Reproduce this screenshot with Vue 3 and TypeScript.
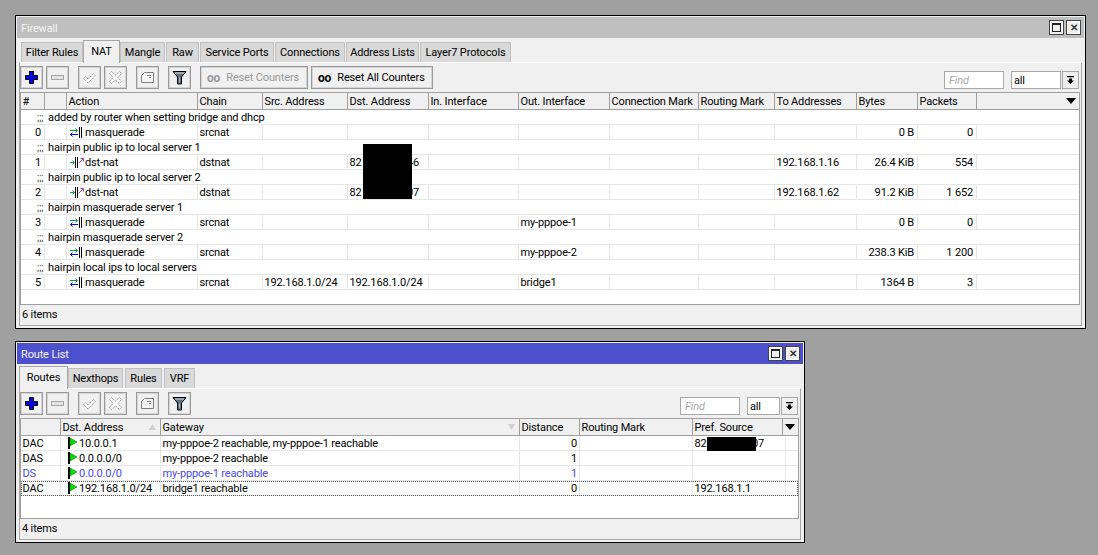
<script setup lang="ts">
interface NatRule {
  id: number
  comment: string
  action: 'masquerade' | 'dst-nat'
  chain: string
  src?: string
  dst?: [string, string] | string
  out?: string
  to?: string
  bytes: string
  packets: string
}

interface Route {
  flags: string
  dst: string
  gateway: string
  distance: string
  pref?: [string, string] | string
  muted?: boolean
  focused?: boolean
}

const natTabs = ['Filter Rules', 'NAT', 'Mangle', 'Raw', 'Service Ports', 'Connections', 'Address Lists', 'Layer7 Protocols']
const routeTabs = ['Routes', 'Nexthops', 'Rules', 'VRF']

const natColumns = [
  '#', '', 'Action', 'Chain', 'Src. Address', 'Dst. Address', 'In. Interface', 'Out. Interface',
  'Connection Mark', 'Routing Mark', 'To Addresses', 'Bytes', 'Packets',
]

const natRules: NatRule[] = [
  { id: 0, comment: 'added by router when setting bridge and dhcp', action: 'masquerade', chain: 'srcnat', bytes: '0 B', packets: '0' },
  { id: 1, comment: 'hairpin public ip to local server 1', action: 'dst-nat', chain: 'dstnat', dst: ['82', '46'], to: '192.168.1.16', bytes: '26.4 KiB', packets: '554' },
  { id: 2, comment: 'hairpin public ip to local server 2', action: 'dst-nat', chain: 'dstnat', dst: ['82', '07'], to: '192.168.1.62', bytes: '91.2 KiB', packets: '1 652' },
  { id: 3, comment: 'hairpin masquerade server 1', action: 'masquerade', chain: 'srcnat', out: 'my-pppoe-1', bytes: '0 B', packets: '0' },
  { id: 4, comment: 'hairpin masquerade server 2', action: 'masquerade', chain: 'srcnat', out: 'my-pppoe-2', bytes: '238.3 KiB', packets: '1 200' },
  { id: 5, comment: 'hairpin local ips to local servers', action: 'masquerade', chain: 'srcnat', src: '192.168.1.0/24', dst: '192.168.1.0/24', out: 'bridge1', bytes: '1364 B', packets: '3' },
]

const routes: Route[] = [
  { flags: 'DAC', dst: '10.0.0.1', gateway: 'my-pppoe-2 reachable, my-pppoe-1 reachable', distance: '0', pref: ['82', '07'] },
  { flags: 'DAS', dst: '0.0.0.0/0', gateway: 'my-pppoe-2 reachable', distance: '1' },
  { flags: 'DS', dst: '0.0.0.0/0', gateway: 'my-pppoe-1 reachable', distance: '1', muted: true },
  { flags: 'DAC', dst: '192.168.1.0/24', gateway: 'bridge1 reachable', distance: '0', pref: '192.168.1.1', focused: true },
]

const tools = [
  { icon: 'i-plus', off: false, gap: false },
  { icon: 'i-minus', off: true, gap: false },
  { icon: 'i-check', off: true, gap: true },
  { icon: 'i-cross', off: true, gap: false },
  { icon: 'i-note', off: true, gap: true },
  { icon: 'i-filter', off: false, gap: true },
]
</script>

<template>
  <div class="desktop">
    <svg class="defs" aria-hidden="true">
      <symbol id="i-plus" viewBox="0 0 15 15">
        <path d="M5.5 1.5h4v4h4v4h-4v4h-4v-4h-4v-4h4z" fill="#0000e6" stroke="#000" />
      </symbol>
      <symbol id="i-minus" viewBox="0 0 15 15">
        <rect x="1.5" y="5.5" width="12" height="4" fill="#e4e4e4" stroke="#a6a6a6" />
      </symbol>
      <symbol id="i-check" viewBox="0 0 15 15">
        <path d="M1.5 8.5l2-2 2.5 2.5 5.5-5.5 2 2-7.5 7.5z" fill="#f8f8f8" stroke="#9a9a9a" stroke-dasharray="1.5 .8" />
      </symbol>
      <symbol id="i-cross" viewBox="0 0 15 15">
        <path d="M3.5 1.5l4 3.5 4-3.5 2 2-3.5 4 3.5 4-2 2-4-3.5-4 3.5-2-2 3.5-4-3.5-4z" fill="#f8f8f8" stroke="#9a9a9a" stroke-dasharray="1.5 .8" />
      </symbol>
      <symbol id="i-note" viewBox="0 0 15 15">
        <path d="M4.5 2.5h9v10h-12v-7z" fill="#f4f4f4" stroke="#808080" />
        <path d="M7 5.5h4M9 7.5h2" stroke="#808080" />
      </symbol>
      <symbol id="i-filter" viewBox="0 0 15 15">
        <path d="M1 1.5h13l-4.5 5.5v7h-4v-7z" fill="#5f7080" stroke="#000" />
        <path d="M3 3h9" stroke="#d8dde2" />
        <path d="M7.5 7.5v5" stroke="#a8b4be" />
      </symbol>
      <symbol id="i-masq" viewBox="0 0 12 11">
        <path d="M0 3.5h7M5.5 1.5l2 2-2 2" fill="none" stroke="#00a040" />
        <path d="M8 7.5h-7M2.5 5.5l-2 2 2 2" fill="none" stroke="#0000e0" />
        <path d="M9.5 0v11M11.5 0v11" stroke="#000" fill="none" />
      </symbol>
      <symbol id="i-dnat" viewBox="0 0 14 11">
        <path d="M0 5.5h4M2.5 3.5l2 2-2 2" fill="none" stroke="#10a050" />
        <path d="M5.5 0v11M7.5 0v11" stroke="#000" fill="none" />
        <path d="M9 6l4-4M10.5 1.5h3v3" fill="none" stroke="#a040c0" />
      </symbol>
      <symbol id="i-flag" viewBox="0 0 10 12">
        <rect x="0" y="0" width="2" height="12" fill="#000" />
        <path d="M2 1l7 4-7 4z" fill="#00e000" stroke="#006000" stroke-width=".5" />
      </symbol>
    </svg>

    <!-- Firewall -->
    <section class="win win-nat">
      <header class="title inactive">
        <span class="title-text">Firewall</span>
        <span class="title-btns">
          <i class="tbtn"><b class="max"></b></i>
          <i class="tbtn close">✕</i>
        </span>
      </header>
      <nav class="tabs">
        <span
          v-for="(t, i) in natTabs"
          :key="t"
          class="tab"
          :class="[{ on: t === 'NAT' }, `nat-tab-${i}`]"
        >{{ t }}</span>
      </nav>
      <div class="pane">
        <div class="toolbar">
          <button
            v-for="tool in tools"
            :key="tool.icon"
            class="tool"
            :class="{ gap: tool.gap, off: tool.off }"
          >
            <svg width="15" height="15"><use :href="`#${tool.icon}`" /></svg>
          </button>
          <button class="tool wide off gap reset-one"><b>oo</b>Reset Counters</button>
          <button class="tool wide reset-all"><b>oo</b>Reset All Counters</button>
          <span class="search">Find</span>
          <span class="combo">all</span>
          <button class="pick"><span class="pick-arrow"></span></button>
        </div>
        <div class="table">
          <div class="row head">
            <span v-for="c in natColumns" :key="c" class="cell">{{ c }}</span>
            <span class="cell menu"><span class="tri"></span></span>
          </div>
          <template v-for="r in natRules" :key="r.id">
            <div class="row note"><span class="semi">;;;</span> {{ r.comment }}</div>
            <div class="row">
              <span class="cell num">{{ r.id }}</span>
              <span class="cell"></span>
              <span class="cell action">
                <svg v-if="r.action === 'masquerade'" class="ico masq" width="12" height="11"><use href="#i-masq" /></svg>
                <svg v-else class="ico dnat" width="14" height="11"><use href="#i-dnat" /></svg>
                <span>{{ r.action }}</span>
              </span>
              <span class="cell">{{ r.chain }}</span>
              <span class="cell">{{ r.src }}</span>
              <span v-if="Array.isArray(r.dst)" class="cell masked">
                <span>{{ r.dst[0] }}</span><span>{{ r.dst[1] }}</span>
              </span>
              <span v-else class="cell">{{ r.dst }}</span>
              <span class="cell"></span>
              <span class="cell">{{ r.out }}</span>
              <span class="cell"></span>
              <span class="cell"></span>
              <span class="cell">{{ r.to }}</span>
              <span class="cell num">{{ r.bytes }}</span>
              <span class="cell num">{{ r.packets }}</span>
              <span class="cell last"></span>
            </div>
          </template>
        </div>
        <div class="status">6 items</div>
      </div>
      <div class="redact redact-nat"></div>
    </section>

    <!-- Route List -->
    <section class="win win-route">
      <header class="title">
        <span class="title-text">Route List</span>
        <span class="title-btns">
          <i class="tbtn"><b class="max"></b></i>
          <i class="tbtn close">✕</i>
        </span>
      </header>
      <nav class="tabs">
        <span
          v-for="(t, i) in routeTabs"
          :key="t"
          class="tab"
          :class="[{ on: i === 0 }, `route-tab-${i}`]"
        >{{ t }}</span>
      </nav>
      <div class="pane">
        <div class="toolbar">
          <button
            v-for="tool in tools"
            :key="tool.icon"
            class="tool"
            :class="{ gap: tool.gap, off: tool.off }"
          >
            <svg width="15" height="15"><use :href="`#${tool.icon}`" /></svg>
          </button>
          <span class="search">Find</span>
          <span class="combo short">all</span>
          <button class="pick"><span class="pick-arrow"></span></button>
        </div>
        <div class="table">
          <div class="row head">
            <span class="cell"></span>
            <span class="cell sorted">Dst. Address<span class="sort up"></span></span>
            <span class="cell sorted">Gateway<span class="sort down"></span></span>
            <span class="cell">Distance</span>
            <span class="cell">Routing Mark</span>
            <span class="cell">Pref. Source</span>
            <span class="cell menu"><span class="tri"></span></span>
          </div>
          <div
            v-for="(r, i) in routes"
            :key="i"
            class="row"
            :class="{ muted: r.muted, focused: r.focused }"
          >
            <span class="cell">{{ r.flags }}</span>
            <span class="cell action">
              <svg class="flag" width="10" height="12"><use href="#i-flag" /></svg>
              <span>{{ r.dst }}</span>
            </span>
            <span class="cell">{{ r.gateway }}</span>
            <span class="cell num">{{ r.distance }}</span>
            <span class="cell"></span>
            <span v-if="Array.isArray(r.pref)" class="cell masked">
              <span>{{ r.pref[0] }}</span><span>{{ r.pref[1] }}</span>
            </span>
            <span v-else class="cell">{{ r.pref }}</span>
            <span class="cell last"></span>
          </div>
        </div>
        <div class="status">4 items</div>
      </div>
      <div class="redact redact-route"></div>
    </section>
  </div>
</template>

<style>
body {
  background: #a0a0a0;
}
</style>

<style scoped>
.desktop {
  position: relative;
  width: 1098px;
  height: 555px;
  overflow: hidden;
  background: #a0a0a0;
  font-family: Roboto, "Liberation Sans", Arial, sans-serif;
  font-size: 11px;
  letter-spacing: -.15px;
  color: #000;
}
.defs {
  position: absolute;
  width: 0;
  height: 0;
}

.win {
  position: absolute;
  left: 15px;
  box-sizing: border-box;
  display: flex;
  flex-direction: column;
  padding: 1px 3px 2px 1px;
  background: #f0f0f0;
  border: 1px solid #000;
}
.win-nat {
  top: 15px;
  width: 1071px;
  height: 314px;
}
.win-route {
  top: 341px;
  width: 790px;
  height: 202px;
}

.title {
  flex: none;
  display: flex;
  align-items: center;
  justify-content: space-between;
  height: 21px;
  margin-right: -2px;
  padding: 0 3px 0 4px;
  background: #4d50cc;
  color: #f4f4f4;
}
.title.inactive {
  background: #bfbfbf;
}
.title-text {
  padding-top: 2px;
}
.title-btns {
  display: flex;
  gap: 2px;
}
.tbtn {
  box-sizing: border-box;
  display: flex;
  align-items: center;
  justify-content: center;
  width: 15px;
  height: 15px;
  border: 1px solid #444;
  background: #f0f0f0;
  font-style: normal;
  font-weight: bold;
  font-size: 10px;
  line-height: 1;
  color: #333;
  box-shadow: inset 0 0 0 1px #fff;
}
.max {
  box-sizing: border-box;
  display: block;
  width: 9px;
  height: 9px;
  border: 1px solid #222;
  border-top-width: 2px;
}

.tabs {
  flex: none;
  display: flex;
  align-items: flex-end;
  height: 24px;
  padding-left: 4px;
}
.tab {
  box-sizing: border-box;
  display: flex;
  align-items: center;
  justify-content: center;
  height: 20px;
  margin-right: 1px;
  background: #d9d9d9;
  border: 1px solid #c0c0c0;
  border-bottom: 0;
  white-space: nowrap;
}
.tab.on {
  position: relative;
  top: 1px;
  height: 23px;
  margin-right: 0;
  padding-bottom: 2px;
  background: #f0f0f0;
  border-color: #a8a8a8;
}
.nat-tab-0 { width: 62px; margin-right: 0; }
.nat-tab-1 { width: 37px; }
.nat-tab-2 { width: 45px; }
.nat-tab-3 { width: 33px; }
.nat-tab-4 { width: 74px; }
.nat-tab-5 { width: 70px; }
.nat-tab-6 { width: 73px; }
.nat-tab-7 { width: 91px; }
.route-tab-0 { width: 49px; margin-left: -2px; }
.route-tab-1 { width: 55px; margin-right: 2px; }
.route-tab-2 { width: 37px; margin-right: 2px; }
.route-tab-3 { width: 31px; }

.pane {
  flex: 1;
  min-height: 0;
  box-sizing: border-box;
  display: flex;
  flex-direction: column;
  margin-left: 2px;
  padding: 3px 1px 3px 0;
  border: 1px solid #a8a8a8;
  border-top-color: #fff;
}

.toolbar {
  flex: none;
  display: flex;
  align-items: flex-start;
  gap: 3px;
  height: 23px;
  margin-bottom: 3px;
  padding-right: 1px;
}
.tool {
  box-sizing: border-box;
  flex: none;
  display: flex;
  align-items: center;
  justify-content: center;
  width: 23px;
  height: 23px;
  padding: 0;
  background: #f0f0f0;
  border: 1px solid #9a9a9a;
  box-shadow: inset 0 0 0 1px #d4d4d4;
  font: inherit;
  letter-spacing: inherit;
  color: #000;
  white-space: nowrap;
}
.tool.off {
  color: #9a9a9a;
}
.tool.gap {
  margin-left: 6px;
}
.tool.wide {
  justify-content: flex-start;
  padding-left: 6px;
}
.tool.wide b {
  margin-right: 6px;
  font-size: 12px;
  line-height: 1;
}
.reset-one {
  width: 108px;
}
.reset-all {
  width: 122px;
}

.search,
.combo {
  box-sizing: border-box;
  flex: none;
  display: flex;
  align-items: center;
  height: 18px;
  margin-top: 5px;
  background: #fff;
  border: 1px solid #a8a8a8;
  padding-left: 4px;
}
.search {
  width: 60px;
  margin-left: auto;
  font-style: italic;
  color: #a8a8a8;
}
.combo {
  width: 50px;
  margin-left: 4px;
  margin-right: -1px;
  padding-left: 2px;
}
.combo.short {
  width: 33px;
}
.pick {
  box-sizing: border-box;
  flex: none;
  display: flex;
  align-items: center;
  justify-content: center;
  width: 17px;
  height: 18px;
  margin-top: 5px;
  margin-left: -1px;
  padding: 0;
  background: #f0f0f0;
  border: 1px solid #a8a8a8;
}
.pick-arrow {
  display: block;
  width: 7px;
  height: 8px;
  background: #000;
  clip-path: polygon(0 0, 100% 0, 100% 15%, 0 15%, 0 30%, 100% 30%, 70% 30%, 70% 55%, 100% 55%, 50% 100%, 0 55%, 30% 55%, 30% 30%, 0 30%);
}

.table {
  flex: 1;
  min-height: 0;
  overflow: hidden;
  background: #fff;
  border: 1px solid #a0a0a0;
}
.row {
  box-sizing: border-box;
  display: grid;
  height: 15px;
  line-height: 16px;
  border-bottom: 1px solid #e6e6e6;
  white-space: nowrap;
}
.win-nat .row {
  grid-template-columns: 24px 22px 131px 65px 85px 81px 90px 91px 89px 76px 82px 61px 59px 1fr;
}
.win-route .row {
  grid-template-columns: 40px 100px 359px 60px 113px 93px 1fr;
}
.win-route .row.head {
  grid-template-columns: 40px 100px 359px 60px 113px 90px 1fr;
}
.cell {
  box-sizing: border-box;
  min-width: 0;
  padding: 0 2px 0 1.5px;
  border-right: 1px solid #e6e6e6;
  overflow: hidden;
}
.cell.last {
  border-right: 0;
}
.num {
  text-align: right;
}
.win-nat .row:not(.head) .num {
  padding-right: 3px;
}

.head {
  height: 17px;
  line-height: 18px;
  background: #f0f0f0;
  border-bottom: 1px solid #a0a0a0;
}
.head .cell {
  border-right-color: #a0a0a0;
}
.menu {
  position: relative;
  border-right: 0;
}
.tri {
  position: absolute;
  right: 3px;
  top: 5px;
  width: 0;
  height: 0;
  border-left: 5px solid transparent;
  border-right: 5px solid transparent;
  border-top: 6px solid #000;
}
.sorted {
  display: flex;
  justify-content: space-between;
  align-items: center;
  padding-top: 2px;
}
.sort {
  width: 7px;
  height: 6px;
  margin-top: -2px;
  margin-right: 2px;
  background: #d0d0d0;
}
.sort.up {
  clip-path: polygon(50% 0, 100% 100%, 0 100%);
}
.sort.down {
  clip-path: polygon(0 0, 100% 0, 50% 100%);
}

.note {
  display: block;
  padding-left: 16px;
}
.semi {
  margin-right: 2px;
  color: #555;
}
.action {
  display: flex;
  align-items: center;
  padding-top: 2px;
  padding-left: 3px;
}
.ico {
  flex: none;
  margin-top: -2px;
}
.ico.masq {
  margin-right: 3px;
}
.ico.dnat {
  margin-right: 1px;
}
.flag {
  flex: none;
  margin: -2px 1px 0 4px;
}
.masked {
  display: flex;
  justify-content: space-between;
  padding-right: 9px;
}
.win-route .masked {
  padding-right: 21px;
}

.muted {
  color: #4848f0;
}
.focused {
  outline: 1px dotted #555;
  outline-offset: -1px;
}

.status {
  flex: none;
  height: 17px;
  padding-left: 2px;
  line-height: 20px;
}

.redact {
  position: absolute;
  background: #000;
}
.redact-nat {
  left: 347px;
  top: 128px;
  width: 49px;
  height: 55px;
}
.redact-route {
  left: 691px;
  top: 95px;
  width: 49px;
  height: 14px;
}
</style>
